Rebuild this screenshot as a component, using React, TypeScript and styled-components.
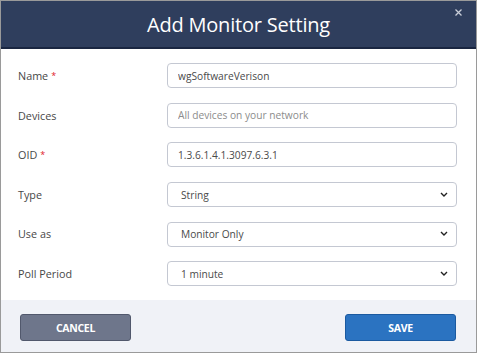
import React from 'react';
import styled, { createGlobalStyle } from 'styled-components';

const GlobalStyle = createGlobalStyle`
  html, body {
    margin: 0;
    padding: 0;
    background: #ffffff;
  }
  * {
    box-sizing: border-box;
  }
`;

const Dialog = styled.div`
  width: 477px;
  height: 353px;
  border: 1px solid #9a9a9a;
  background: #ffffff;
  display: flex;
  flex-direction: column;
  font-family: 'Open Sans', 'Liberation Sans', sans-serif;
`;

const Header = styled.div`
  position: relative;
  height: 48px;
  flex: none;
  background: #2f3e5d;
  border-bottom: 2px solid #1a2641;
  display: flex;
  align-items: center;
  justify-content: center;
`;

const Title = styled.h1`
  margin: 0;
  font-size: 20px;
  font-weight: 400;
  color: #ffffff;
  letter-spacing: -0.2px;
`;

const CloseButton = styled.button`
  position: absolute;
  top: 7px;
  right: 13px;
  width: 9px;
  height: 9px;
  padding: 0;
  border: none;
  background: none;
  display: flex;
  align-items: center;
  justify-content: center;
  cursor: pointer;
`;

const Form = styled.div`
  flex: 1;
  display: flex;
  flex-direction: column;
  gap: 14.6px;
  padding: 14px 19px 0 17px;
`;

const Row = styled.div`
  display: flex;
  align-items: center;
  height: 25px;
`;

const Label = styled.label`
  width: 149px;
  flex: none;
  font-size: 10.8px;
  color: #474747;
`;

const Required = styled.span`
  color: #e0202a;
  font-size: 9px;
  margin-left: 3px;
  vertical-align: 1px;
`;

const TextInput = styled.input`
  flex: 1;
  height: 25px;
  border: 1px solid #c4c8d2;
  border-radius: 4px;
  padding: 0 10px;
  font-family: inherit;
  font-size: 10.2px;
  color: #4a4a4a;
  outline: none;

  &::placeholder {
    color: #8c8c8c;
  }
`;

const SelectWrap = styled.div`
  position: relative;
  flex: 1;
  height: 25px;
`;

const Select = styled.select`
  width: 100%;
  height: 25px;
  appearance: none;
  -webkit-appearance: none;
  border: 1px solid #c4c8d2;
  border-radius: 4px;
  background: #ffffff;
  padding: 0 24px 0 13px;
  font-family: inherit;
  font-size: 10.2px;
  color: #4a4a4a;
  outline: none;
`;

const Chevron = styled.svg`
  position: absolute;
  right: 9px;
  top: 10px;
  pointer-events: none;
`;

const Footer = styled.div`
  height: 52px;
  flex: none;
  background: #f0f2f7;
  display: flex;
  justify-content: space-between;
  align-items: flex-start;
  padding: 14px 20px 0 19px;
`;

const Button = styled.button<{ $primary?: boolean }>`
  width: 111px;
  height: 27px;
  border-radius: 3px;
  border: 1px solid ${(p) => (p.$primary ? '#1b5aa0' : '#51586c')};
  background: ${(p) => (p.$primary ? '#2b73c1' : '#6e768b')};
  color: #ffffff;
  font-family: inherit;
  font-size: 10.5px;
  font-weight: 700;
  letter-spacing: -0.3px;
  cursor: pointer;
`;

const ChevronIcon = () => (
  <Chevron width="8" height="5" viewBox="0 0 8 5">
    <path d="M1 1 L4 4 L7 1" fill="none" stroke="#222" strokeWidth="1.4" />
  </Chevron>
);

const SelectField: React.FC<{ value: string; options: string[] }> = ({ value, options }) => (
  <SelectWrap>
    <Select defaultValue={value}>
      {options.map((o) => (
        <option key={o} value={o}>
          {o}
        </option>
      ))}
    </Select>
    <ChevronIcon />
  </SelectWrap>
);

const App: React.FC = () => {
  return (
    <>
      <GlobalStyle />
      <Dialog>
        <Header>
          <Title>Add Monitor Setting</Title>
          <CloseButton aria-label="Close">
            <svg width="7" height="7" viewBox="0 0 7 7">
              <path d="M0.5 0.5 L6.5 6.5 M6.5 0.5 L0.5 6.5" stroke="#c9ced9" strokeWidth="1.3" />
            </svg>
          </CloseButton>
        </Header>

        <Form>
          <Row>
            <Label>
              Name<Required>*</Required>
            </Label>
            <TextInput defaultValue="wgSoftwareVerison" />
          </Row>
          <Row>
            <Label>Devices</Label>
            <TextInput placeholder="All devices on your network" />
          </Row>
          <Row>
            <Label>
              OID<Required>*</Required>
            </Label>
            <TextInput defaultValue="1.3.6.1.4.1.3097.6.3.1" />
          </Row>
          <Row>
            <Label>Type</Label>
            <SelectField value="String" options={['String', 'Integer', 'Counter']} />
          </Row>
          <Row>
            <Label>Use as</Label>
            <SelectField value="Monitor Only" options={['Monitor Only', 'Alarm']} />
          </Row>
          <Row>
            <Label>Poll Period</Label>
            <SelectField value="1 minute" options={['1 minute', '5 minutes', '10 minutes']} />
          </Row>
        </Form>

        <Footer>
          <Button>CANCEL</Button>
          <Button $primary>SAVE</Button>
        </Footer>
      </Dialog>
    </>
  );
};

export default App;
